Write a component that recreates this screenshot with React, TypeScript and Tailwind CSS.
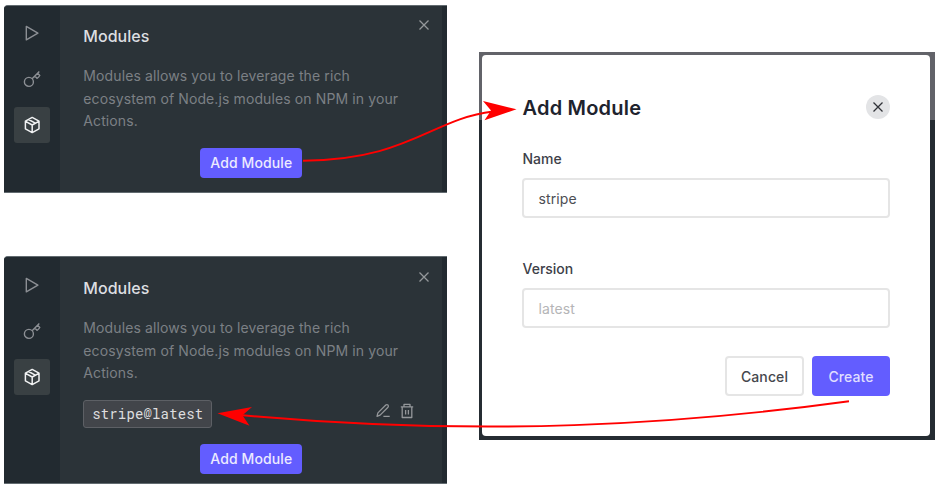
import React from "react";

type IconProps = { className?: string };

const PlayIcon = ({ className = "" }: IconProps) => (
  <svg viewBox="0 0 16 18" fill="none" stroke="currentColor" strokeWidth="1.4" strokeLinejoin="round" className={`h-[18px] w-4 ${className}`}>
    <path d="M2.3 2.4 13.9 9.1 2.3 15.8Z" />
  </svg>
);

const KeyIcon = ({ className = "" }: IconProps) => (
  <svg viewBox="0 0 18 18" fill="none" stroke="currentColor" strokeWidth="1.4" strokeLinejoin="round" className={`h-[18px] w-[18px] ${className}`}>
    <circle cx="5.9" cy="11.9" r="4.5" />
    <path d="M9.1 8.8 16.3 1.6M11.8 6.1 14 8.3Q15.7 7.5 16.8 5.5L14.6 3.3" />
  </svg>
);

const PackageIcon = ({ className = "" }: IconProps) => (
  <svg viewBox="0 0 18 18" fill="none" stroke="currentColor" strokeWidth="1.5" strokeLinejoin="round" className={`h-[18px] w-[18px] ${className}`}>
    <path d="M9.2 1.4 16 5.2V12.8L9.2 16.6 2.4 12.8V5.2ZM2.6 5.3 9.2 9 15.8 5.3M9.2 9V16.5M5.6 3.5 12.3 7.2" />
  </svg>
);

const CloseIcon = ({ className = "" }: IconProps) => (
  <svg viewBox="0 0 10 10" fill="none" stroke="currentColor" strokeWidth="1.3" className={`h-2.5 w-2.5 ${className}`}>
    <path d="M.5.5 9.5 9.5M9.5.5.5 9.5" />
  </svg>
);

const EditIcon = () => (
  <svg viewBox="0 0 16 16" fill="none" stroke="currentColor" strokeWidth="1.3" strokeLinejoin="round" className="h-4 w-4">
    <path d="M2 13.3 2.9 9.9 10.8 2Q11.9 1.1 13 2.1 13.9 3.1 13 4.2L5.1 12.1ZM8.4 13.4H14.7" />
  </svg>
);

const TrashIcon = () => (
  <svg viewBox="0 0 16 16" fill="none" stroke="currentColor" strokeWidth="1.3" strokeLinejoin="round" className="h-4 w-4">
    <path d="M1.8 3.9H14.2M5 3.8V1.3H11V3.8M3.2 4V14.5H12.8V4M6.6 7V11.5M9.4 7V11.5" />
  </svg>
);

function ModulesPanel({ installed = false }: { installed?: boolean }) {
  return (
    <section className={`flex w-[443px] overflow-hidden rounded-tl-[4px] border-y border-[#626b70] bg-[#2b3338] ${installed ? "h-[228px]" : "h-[188px]"}`}>
      <nav className={`flex w-14 shrink-0 flex-col items-center bg-[#222a30] text-[#8c8f94] ${installed ? "pt-px" : ""}`}>
        <PlayIcon className="mt-[18px]" />
        <KeyIcon className="mt-7" />
        <div className="mt-[19px] flex h-9 w-9 items-center justify-center rounded-[3px] bg-[#394043] text-[#f0f1f2]">
          <PackageIcon />
        </div>
      </nav>
      <div className={`flex min-w-0 flex-1 flex-col pl-[23.3px] pr-[27px] ${installed ? "pt-px" : ""}`}>
        <header className="flex h-[59px] justify-between">
          <h2 className="pt-[18px] text-[16px] font-medium leading-6 tracking-[0.05px] text-[#dddfe1]">Modules</h2>
          <CloseIcon className="-mr-[13.5px] mt-[14px] text-[#94989b]" />
        </header>
        <p className="whitespace-nowrap text-[14px] leading-[22.5px] tracking-[0.11px] text-[#7c8085]">
          Modules allows you to leverage the rich<br />
          ecosystem of Node.js modules on NPM in your<br />
          Actions.
        </p>
        {installed && (
          <div className="mt-[15px] flex h-7 items-center justify-between">
            <code className="flex h-7 w-[129px] items-center justify-center rounded-[3px] border border-[#5d6065] bg-[#42454a] font-['Roboto_Mono','DejaVu_Sans_Mono',monospace] text-[14px] tracking-[0.15px] text-[#dddddf]">stripe@latest</code>
            <div className="flex gap-2 pb-[5px] text-[#94979a]">
              <EditIcon />
              <TrashIcon />
            </div>
          </div>
        )}
        <button className={`ml-[117px] flex h-[30px] w-[102px] shrink-0 items-center justify-center rounded-[4px] bg-[#635dff] text-[14px] font-medium tracking-[0.1px] text-[#eceaff] ${installed ? "mt-4" : "mt-[15px]"}`}>
          Add Module
        </button>
      </div>
      <div className="w-[5px] shrink-0 bg-[#222a30]" />
    </section>
  );
}

function Field({ label, value, placeholder }: { label: string; value?: string; placeholder?: string }) {
  return (
    <div className="flex flex-col">
      <span className="h-[29px] pl-[0.5px] text-[14px] font-medium leading-5 text-[#3d4048]">{label}</span>
      <div className={`flex h-10 items-center rounded-[4px] border-2 border-[#e5e5e5] px-[14.5px] text-[14px] tracking-[0.1px] ${value ? "text-[#4c4e54]" : "text-[#b5b5b7]"}`}>
        {value ?? placeholder}
      </div>
    </div>
  );
}

function AddModuleDialog() {
  return (
    <div className="mt-[52px] flex h-[388px] w-[456px] flex-col bg-linear-to-b from-[#626369] from-[68px] to-[#252c32] to-[68px] pb-1 pl-[3px] pr-[5px] pt-[3px]">
      <div className="flex flex-1 flex-col rounded-[4px] bg-white pl-10 pr-10">
        <header className="mt-10 flex h-6 items-center justify-between">
          <h1 className="pl-[0.5px] pt-px text-[20px] font-semibold leading-6 tracking-[0.2px] text-[#20232d]">Add Module</h1>
          <div className="flex h-6 w-6 items-center justify-center rounded-full bg-[#e3e4e6] text-[#303238]">
            <CloseIcon />
          </div>
        </header>
        <div className="mt-[30px]"><Field label="Name" value="stripe" /></div>
        <div className="mt-[41px]"><Field label="Version" placeholder="latest" /></div>
        <div className="mt-7 flex justify-end gap-2 text-[14px] font-medium">
          <button className="flex h-10 w-[79px] items-center justify-center rounded-[4px] border-2 border-[#e5e5e5] tracking-[0.1px] text-[#45474d]">Cancel</button>
          <button className="flex h-10 w-[78px] items-center justify-center rounded-[4px] bg-[#635dff] tracking-[0.1px] text-[#e0dfff]">Create</button>
        </div>
      </div>
    </div>
  );
}

export default function App() {
  return (
    <main className="relative flex h-[490px] w-[940px] overflow-hidden bg-white pl-1 font-['Inter','Liberation_Sans',sans-serif]">
      <div className="flex w-[475px] shrink-0 flex-col gap-[63px] pt-[5px]">
        <ModulesPanel />
        <ModulesPanel installed />
      </div>
      <AddModuleDialog />
      <svg viewBox="0 0 940 490" className="pointer-events-none absolute inset-0 h-full w-full" fill="none" stroke="#ff0000" strokeWidth="1.9">
        <path d="M303 160.7C409 160 431 119 493 111.5" />
        <path d="M849 401.2C683 424 485 437.5 240 415" />
        <path d="M516.5 109.3 483 101 491 110.5 484.5 120.2Z" fill="#ff0000" stroke="none" />
        <path d="M217.5 413.3 252 407 242.5 415.3 249.5 425.8Z" fill="#ff0000" stroke="none" />
      </svg>
    </main>
  );
}
